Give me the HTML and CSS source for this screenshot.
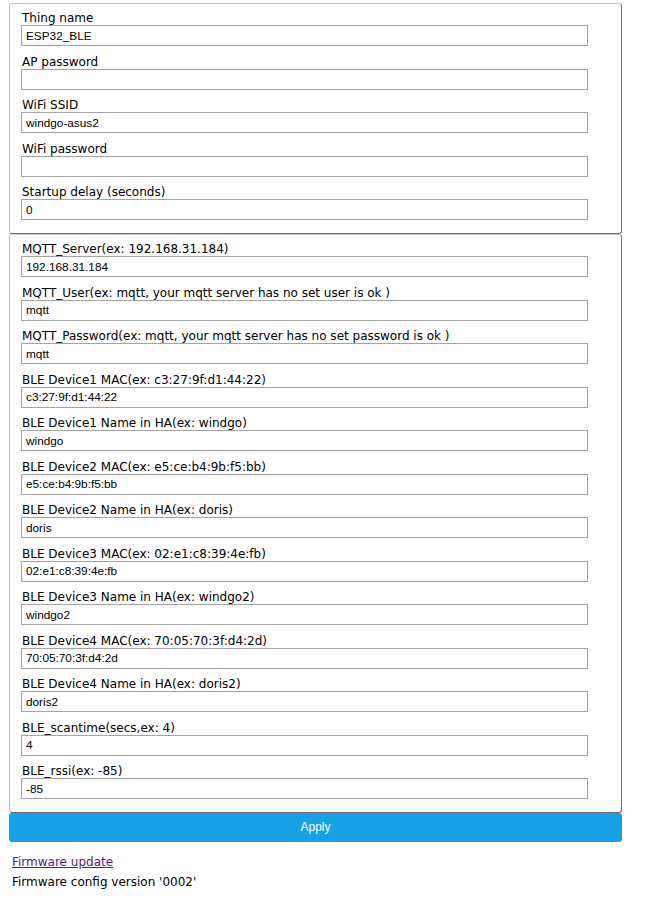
FILE: index.html
```html
<!DOCTYPE html>
<html>
<head>
<meta charset="utf-8">
<link rel="stylesheet" href="styles.css">
</head>
<body>
<div class="page">
  <form class="form">
    <fieldset class="group">
      <div class="field"><label class="lbl">Thing name</label><input class="inp" value="ESP32_BLE"></div>
      <div class="field"><label class="lbl">AP password</label><input class="inp" value=""></div>
      <div class="field"><label class="lbl">WiFi SSID</label><input class="inp" value="windgo-asus2"></div>
      <div class="field"><label class="lbl">WiFi password</label><input class="inp" value=""></div>
      <div class="field"><label class="lbl">Startup delay (seconds)</label><input class="inp" value="0"></div>
    </fieldset>
    <fieldset class="group">
      <div class="field"><label class="lbl">MQTT_Server(ex: 192.168.31.184)</label><input class="inp" value="192.168.31.184"></div>
      <div class="field"><label class="lbl">MQTT_User(ex: mqtt, your mqtt server has no set user is ok )</label><input class="inp" value="mqtt"></div>
      <div class="field"><label class="lbl">MQTT_Password(ex: mqtt, your mqtt server has no set password is ok )</label><input class="inp" value="mqtt"></div>
      <div class="field"><label class="lbl">BLE Device1 MAC(ex: c3:27:9f:d1:44:22)</label><input class="inp" value="c3:27:9f:d1:44:22"></div>
      <div class="field"><label class="lbl">BLE Device1 Name in HA(ex: windgo)</label><input class="inp" value="windgo"></div>
      <div class="field"><label class="lbl">BLE Device2 MAC(ex: e5:ce:b4:9b:f5:bb)</label><input class="inp" value="e5:ce:b4:9b:f5:bb"></div>
      <div class="field"><label class="lbl">BLE Device2 Name in HA(ex: doris)</label><input class="inp" value="doris"></div>
      <div class="field"><label class="lbl">BLE Device3 MAC(ex: 02:e1:c8:39:4e:fb)</label><input class="inp" value="02:e1:c8:39:4e:fb"></div>
      <div class="field"><label class="lbl">BLE Device3 Name in HA(ex: windgo2)</label><input class="inp" value="windgo2"></div>
      <div class="field"><label class="lbl">BLE Device4 MAC(ex: 70:05:70:3f:d4:2d)</label><input class="inp" value="70:05:70:3f:d4:2d"></div>
      <div class="field"><label class="lbl">BLE Device4 Name in HA(ex: doris2)</label><input class="inp" value="doris2"></div>
      <div class="field"><label class="lbl">BLE_scantime(secs,ex: 4)</label><input class="inp" value="4"></div>
      <div class="field"><label class="lbl">BLE_rssi(ex: -85)</label><input class="inp" value="-85"></div>
    </fieldset>
    <button class="apply" type="button">Apply</button>
  </form>
  <div class="footer">
    <a class="fw-link" href="#">Firmware update</a>
    <div class="fw-ver">Firmware config version '0002'</div>
  </div>
</div>
</body>
</html>
```

FILE: styles.css
```css
html, body {
  margin: 0;
  padding: 0;
  background: #fff;
}
.page {
  padding: 3px 0 0 9px;
  width: 613px;
  font-family: "DejaVu Sans", Verdana, sans-serif;
  font-size: 12px;
  color: #000;
}
.form {
  margin: 0;
}
.group {
  box-sizing: border-box;
  width: 613px;
  margin: 0;
  padding: 5px 0 6.5px 11px;
  border: 1px solid;
  border-color: #c4c4c4 #707070 #707070 #c4c4c4;
  border-radius: 3px;
}
.field {
  display: flex;
  flex-direction: column;
  align-items: flex-start;
  margin-bottom: 6.5px;
}
.lbl {
  display: block;
  box-sizing: border-box;
  height: 16px;
  padding-top: 1px;
  line-height: 16px;
  padding-left: 1px;
  white-space: nowrap;
}
.inp {
  box-sizing: border-box;
  width: 567px;
  height: 21px;
  margin: 0;
  padding: 0 4px;
  border: 1px solid #a4a4a4;
  border-radius: 0;
  font-family: "Liberation Sans", Arial, sans-serif;
  font-size: 11.8px;
  color: #000;
  background: #fff;
  outline: none;
}
.apply {
  display: block;
  width: 613px;
  height: 29px;
  margin: 0;
  border: 0;
  border-radius: 3px;
  background: #16A1E7;
  color: #fff;
  font-family: "Liberation Sans", Arial, sans-serif;
  font-size: 12px;
  padding: 0 0 2px 0;
}
.footer {
  padding: 10px 0 0 3px;
}
.fw-link {
  display: block;
  color: #551A8B;
  text-decoration: underline;
  line-height: 20px;
}
.fw-ver {
  line-height: 20px;
}
```
